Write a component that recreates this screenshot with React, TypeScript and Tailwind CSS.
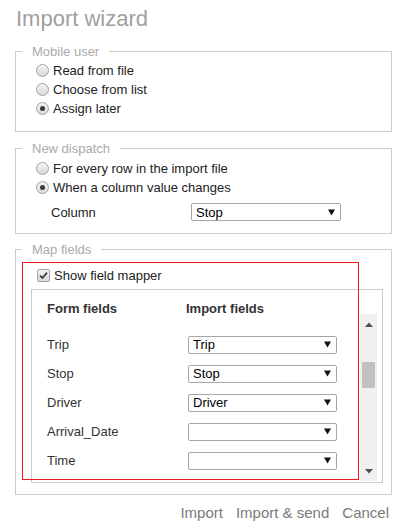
import React from "react";

function Radio({ checked }: { checked?: boolean }) {
  return (
    <span className="flex h-[13px] w-[13px] shrink-0 items-center justify-center rounded-full border border-[#a3a3a3] bg-gradient-to-b from-[#f4f4f4] to-[#d9d9d9]">
      {checked && <span className="h-[5px] w-[5px] rounded-full bg-[#3a3a3a]" />}
    </span>
  );
}

function Checkbox() {
  return (
    <span className="flex h-[13px] w-[13px] shrink-0 items-center justify-center rounded-[2px] border border-[#a3a3a3] bg-gradient-to-b from-[#f4f4f4] to-[#d9d9d9]">
      <svg width="9" height="9" viewBox="0 0 9 9">
        <path d="M1 4.6 L3.5 7 L8 1.6" fill="none" stroke="#3a3a3a" strokeWidth="1.8" />
      </svg>
    </span>
  );
}

function Arrow() {
  return (
    <svg width="7" height="7" viewBox="0 0 7 7" className="shrink-0">
      <polygon points="0,0.5 7,0.5 3.5,6.5" fill="#111" />
    </svg>
  );
}

function Select({ value, className }: { value?: string; className: string }) {
  return (
    <div className={"flex h-[18px] items-center justify-between rounded-[2px] border border-[#a6a6a6] bg-white pl-[4px] pr-[5px] text-[13px] text-black " + className}>
      <span>{value}</span>
      <Arrow />
    </div>
  );
}

function RadioRow({ label, checked }: { label: string; checked?: boolean }) {
  return (
    <div className="flex h-[19px] items-center gap-[4px] text-[#222]">
      <Radio checked={checked} />
      <span>{label}</span>
    </div>
  );
}

const rows = [
  { name: "Trip", value: "Trip" },
  { name: "Stop", value: "Stop" },
  { name: "Driver", value: "Driver" },
  { name: "Arrival_Date", value: "" },
  { name: "Time", value: "" },
];

export default function App() {
  return (
    <div className="relative h-[530px] w-[408px] overflow-hidden bg-white font-['Liberation_Sans',Arial,sans-serif] text-[13px] leading-[15px] text-[#333]">
      <h1 className="pl-[16px] pt-[6px] text-[22px] leading-[26px] text-[#a0a0a0]">Import wizard</h1>

      <div className="pl-[15px] pr-[16px]">
        <fieldset className="mt-[12px] border border-[#cccccc] pb-[13px] pl-[20px] pt-[2px]">
          <legend className="ml-[-14px] px-[10px] text-[#aaaaaa]">Mobile user</legend>
          <RadioRow label="Read from file" />
          <RadioRow label="Choose from list" />
          <RadioRow label="Assign later" checked />
        </fieldset>

        <fieldset className="mt-[9px] border border-[#cccccc] pb-[12px] pl-[20px] pt-[3px]">
          <legend className="ml-[-14px] px-[10px] text-[#aaaaaa]">New dispatch</legend>
          <RadioRow label="For every row in the import file" />
          <RadioRow label="When a column value changes" checked />
          <div className="mt-[6px] flex h-[18px] items-center text-[#222]">
            <span className="ml-[15px] w-[140px]">Column</span>
            <Select value="Stop" className="w-[150px]" />
          </div>
        </fieldset>

        <fieldset className="mt-[8px] border border-[#cccccc] pb-[11px] pl-[15px] pr-[8px]">
          <legend className="ml-[-9px] px-[10px] text-[#aaaaaa]">Map fields</legend>
          <div className="ml-[6px] mt-[9px] flex h-[19px] items-center gap-[4px] text-[#222]">
            <Checkbox />
            <span>Show field mapper</span>
          </div>
          <div className="mt-[4px] flex h-[194px] border border-[#cccccc]">
            <div className="min-w-0 flex-1 overflow-hidden pl-[15px] pt-[11px]">
              <div className="flex h-[15px] items-center font-bold text-[#333]">
                <span className="w-[139px]">Form fields</span>
                <span>Import fields</span>
              </div>
              <div className="mt-[14px]">
                {rows.map((r) => (
                  <div key={r.name} className="flex h-[29px] items-center text-[#333]">
                    <span className="w-[141px]">{r.name}</span>
                    <Select value={r.value} className="w-[149px]" />
                  </div>
                ))}
              </div>
            </div>
            <div className="mb-[1px] mr-[5px] mt-[24px] flex w-[17px] flex-col items-center bg-[#f0f0f0]">
              <svg width="8" height="5" viewBox="0 0 8 5" className="mt-[8px]">
                <polygon points="0,5 8,5 4,0.5" fill="#505050" />
              </svg>
              <div className="mt-[35px] h-[26px] w-[13px] bg-[#c1c1c1]" />
              <div className="flex-1" />
              <svg width="8" height="5" viewBox="0 0 8 5" className="mb-[7px]">
                <polygon points="0,0 8,0 4,4.5" fill="#505050" />
              </svg>
            </div>
          </div>
        </fieldset>

        <div className="mt-[9px] flex justify-end gap-[13px] pr-[3px] text-[15px] leading-[17px] text-[#7a7a7a]">
          <span>Import</span>
          <span>Import &amp; send</span>
          <span>Cancel</span>
        </div>
      </div>

      <div className="pointer-events-none absolute left-[22px] top-[262px] h-[218px] w-[337px] border border-[#ed1c24]" />
    </div>
  );
}
